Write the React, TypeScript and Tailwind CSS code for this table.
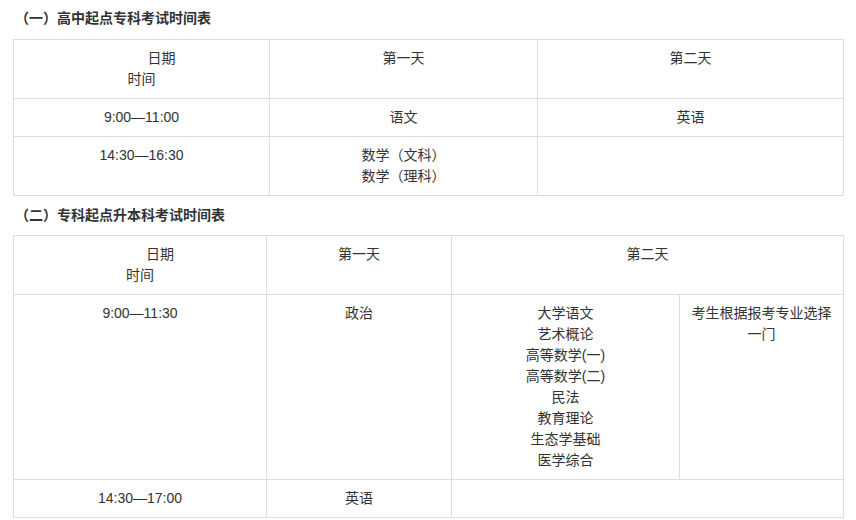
import React from "react";

const cell = "border border-[#dddddd] px-2 py-2 align-top text-center";

function DateTimeHeader() {
  return (
    <td className={cell}>
      <div>
        <span className="inline-block pl-[40px]">日期</span>
      </div>
      <div>时间</div>
    </td>
  );
}

export default function App() {
  return (
    <div
      className="bg-white w-[856px] h-[520px] overflow-hidden px-[13px] pt-2 text-[14px] leading-[21px] text-[#333333]"
      style={{ fontFamily: '"Liberation Sans", "Noto Sans CJK SC", sans-serif' }}
    >
      <h3 className="font-bold text-[14px] leading-[21px] mb-[10px] pl-[2px]">（一）高中起点专科考试时间表</h3>
      <table className="w-[830px] table-fixed border-collapse">
        <colgroup>
          <col className="w-[256px]" />
          <col className="w-[268px]" />
          <col className="w-[306px]" />
        </colgroup>
        <tbody>
          <tr>
            <DateTimeHeader />
            <td className={cell}>第一天</td>
            <td className={cell}>第二天</td>
          </tr>
          <tr>
            <td className={cell}>9:00—11:00</td>
            <td className={cell}>语文</td>
            <td className={cell}>英语</td>
          </tr>
          <tr>
            <td className={cell}>14:30—16:30</td>
            <td className={cell}>
              <div>数学（文科）</div>
              <div>数学（理科）</div>
            </td>
            <td className={cell}></td>
          </tr>
        </tbody>
      </table>

      <h3 className="font-bold text-[14px] leading-[21px] mt-[9px] mb-[9px] pl-[2px]">（二）专科起点升本科考试时间表</h3>
      <table className="w-[830px] table-fixed border-collapse">
        <colgroup>
          <col className="w-[253px]" />
          <col className="w-[185px]" />
          <col className="w-[228px]" />
          <col className="w-[164px]" />
        </colgroup>
        <tbody>
          <tr>
            <DateTimeHeader />
            <td className={cell}>第一天</td>
            <td className={cell} colSpan={2}>第二天</td>
          </tr>
          <tr>
            <td className={cell}>9:00—11:30</td>
            <td className={cell}>政治</td>
            <td className={cell}>
              <div>大学语文</div>
              <div>艺术概论</div>
              <div>高等数学(一)</div>
              <div>高等数学(二)</div>
              <div>民法</div>
              <div>教育理论</div>
              <div>生态学基础</div>
              <div>医学综合</div>
            </td>
            <td className={cell}>考生根据报考专业选择一门</td>
          </tr>
          <tr>
            <td className={cell}>14:30—17:00</td>
            <td className={cell}>英语</td>
            <td className={cell} colSpan={2}></td>
          </tr>
        </tbody>
      </table>
    </div>
  );
}
